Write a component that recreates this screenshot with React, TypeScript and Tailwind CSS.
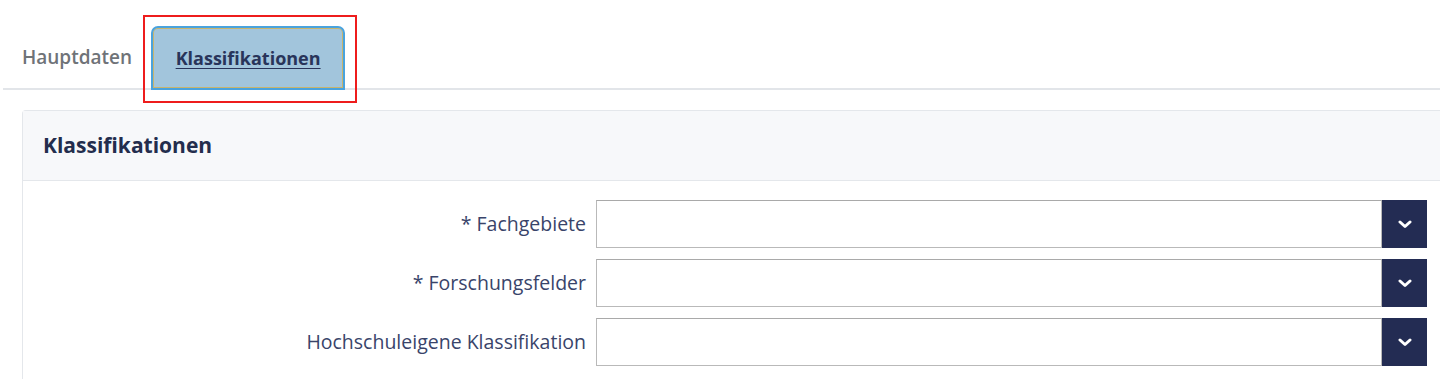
const fields = ["* Fachgebiete", "* Forschungsfelder", "Hochschuleigene Klassifikation"];

export default function App() {
    return (
        <div className="relative h-[379px] w-[1440px] overflow-hidden bg-white font-['Open_Sans',sans-serif]">
            {/* tab bar */}
            <div className="ml-[3px] flex h-[90px] items-stretch border-b-2 border-[#e2e5e9] pt-[26px]">
                <div className="flex items-center pl-[19px] pr-[19px] text-[19px] font-semibold text-[#6f7378]">
                    Hauptdaten
                </div>
                <div className="-mb-[2px] flex w-[194px] items-center justify-center rounded-t-[7px] border-2 border-[#4aa3de] bg-[#a2c5dc] shadow-[inset_0_0_0_1px_#c8b56e]">
                    <span className="text-[18px] font-bold text-[#28345a] underline underline-offset-[3px]">Klassifikationen</span>
                </div>
            </div>

            {/* annotation box */}
            <div className="absolute left-[143px] top-[15px] h-[88px] w-[214px] border-2 border-[#ee1c1c]" />

            {/* panel */}
            <div className="ml-[22px] mt-[20px] rounded-tl-[4px] border border-r-0 border-[#e4e7eb]">
                <div className="flex h-[70px] items-center border-b border-[#e4e7eb] bg-[#f7f8fa] px-[20px]">
                    <h2 className="text-[21px] font-bold text-[#232d4d]">Klassifikationen</h2>
                </div>
                <div className="flex flex-col gap-[11px] pt-[19px] pb-6">
                    {fields.map((f) => (
                        <div key={f} className="flex h-[48px] items-center">
                            <label className="w-[573px] pr-[10px] text-right text-[19.5px] text-[#39446a]">{f}</label>
                            <div className="flex h-full w-[831px]">
                                <div className="h-full flex-1 border border-[#b9b9b9] border-t-[#a9a9a9] bg-white" />
                                <div className="flex h-full w-[45px] items-center justify-center bg-[#232c53]">
                                    <svg width="14" height="9" viewBox="0 0 14 9" fill="none">
                                        <polyline points="2,2 7,6.5 12,2" stroke="white" strokeWidth="3" strokeLinecap="round" strokeLinejoin="round" />
                                    </svg>
                                </div>
                            </div>
                        </div>
                    ))}
                </div>
            </div>
        </div>
    );
}
